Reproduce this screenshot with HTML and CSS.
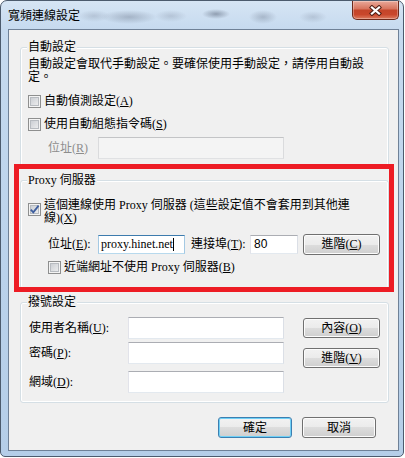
FILE: index.html
```html
<!DOCTYPE html>
<html lang="zh-Hant">
<head>
    <meta charset="UTF-8">
    <title>寬頻連線設定</title>
    <link rel="stylesheet" href="styles.css">
</head>
<body>
    <div class="window">
        <div class="titlebar">
            <span class="title">寬頻連線設定</span>
            <div class="close">
                <svg width="13" height="11" viewBox="0 0 13 11">
                    <path d="M3 2.5 L10 8.5 M10 2.5 L3 8.5" stroke="#4e1d13" stroke-width="4.2" stroke-linecap="square" fill="none"/>
                    <path d="M3 2.5 L10 8.5 M10 2.5 L3 8.5" stroke="#fff" stroke-width="2.3" stroke-linecap="square" fill="none"/>
                </svg>
            </div>
        </div>

        <div class="client">
            <fieldset class="group group-auto">
                <legend>自動設定</legend>
                <p class="desc">自動設定會取代手動設定。要確保使用手動設定，請停用自動設<br>定。</p>
                <div class="check-row row-a"><span class="chk"></span>自動偵測設定(<u>A</u>)</div>
                <div class="check-row row-b"><span class="chk"></span>使用自動組態指令碼(<u>S</u>)</div>
                <div class="field-row indent row-r">
                    <span class="lbl lbl-short disabled">位址(<u>R</u>)</span>
                    <div class="textbox off tb-script"></div>
                </div>
            </fieldset>

            <fieldset class="group group-proxy">
                <legend>Proxy 伺服器</legend>
                <div class="check-row multi">
                    <span class="chk on">
                        <svg width="11" height="11" viewBox="0 0 11 11"><path d="M1.8 5.6 L4.3 8.4 L9.6 1.6" stroke="#3e5e9e" stroke-width="1.8" fill="none"/></svg>
                    </span>
                    <span>這個連線使用 Proxy 伺服器 (這些設定值不會套用到其他連<br>線)(<u>X</u>)</span>
                </div>
                <div class="field-row indent row-addr">
                    <span class="lbl lbl-short">位址(<u>E</u>):</span>
                    <div class="textbox focus tb-addr">proxy.hinet.net<i class="caret"></i></div>
                    <span class="lbl lbl-port">連接埠(<u>T</u>):</span>
                    <div class="textbox tb-port">80</div>
                    <button class="btn btn-adv">進階(<u>C</u>)</button>
                </div>
                <div class="check-row indent row-local"><span class="chk"></span>近端網址不使用 Proxy 伺服器(<u>B</u>)</div>
            </fieldset>

            <fieldset class="group group-dial">
                <legend>撥號設定</legend>
                <div class="dial">
                    <div class="dial-fields">
                        <div class="field-row dial-row1">
                            <span class="lbl lbl-dial">使用者名稱(<u>U</u>):</span>
                            <div class="textbox tb-dial"></div>
                        </div>
                        <div class="field-row dial-row2">
                            <span class="lbl lbl-dial">密碼(<u>P</u>):</span>
                            <div class="textbox tb-dial"></div>
                        </div>
                        <div class="field-row dial-row3">
                            <span class="lbl lbl-dial">網域(<u>D</u>):</span>
                            <div class="textbox tb-dial"></div>
                        </div>
                    </div>
                    <div class="dial-buttons">
                        <button class="btn btn-side">內容(<u>O</u>)</button>
                        <button class="btn btn-side">進階(<u>V</u>)</button>
                    </div>
                </div>
            </fieldset>

            <div class="footer">
                <button class="btn btn-footer default">確定</button>
                <button class="btn btn-footer">取消</button>
            </div>

            <!-- red marker drawn over the proxy group -->
            <div class="highlight"></div>
        </div>
    </div>
</body>
</html>
```

FILE: styles.css
```css
body {
    margin: 0;
    background: #fff;
    font: 12px/14px "Liberation Serif", "Noto Sans CJK TC", serif;
    color: #000;
}
.window {
    width: 404px;
    height: 457px;
    box-sizing: border-box;
    border: 1px solid #4c5b6d;
    border-radius: 7px 7px 5px 5px;
    background: linear-gradient(#d6e5f4, #c6daef 28px, #bad2eb 60%, #b5cee8);
    display: flex;
    flex-direction: column;
}
.titlebar {
    height: 28px;
    display: flex;
    align-items: flex-start;
    padding: 0 4px 0 7px;
    background:
        radial-gradient(16px 6px at 93px 15px, rgba(90, 100, 120, 0.22), transparent),
        radial-gradient(28px 7px at 128px 16px, rgba(70, 80, 100, 0.3), transparent),
        radial-gradient(16px 6px at 170px 15px, rgba(90, 100, 120, 0.22), transparent),
        radial-gradient(14px 5px at 215px 13px, rgba(50, 60, 80, 0.4), transparent),
        radial-gradient(14px 7px at 262px 16px, rgba(70, 80, 100, 0.28), transparent),
        radial-gradient(14px 6px at 312px 16px, rgba(90, 100, 120, 0.22), transparent);
}
.title {
    flex: 1;
    line-height: 28px;
    font-family: "Noto Sans CJK TC", sans-serif;
}
.close {
    width: 47px;
    height: 19px;
    box-sizing: border-box;
    border: 1px solid #6d2a1c;
    border-top: none;
    border-radius: 0 0 5px 5px;
    background: linear-gradient(#e9a99a, #d87660 42%, #c4452a 52%, #c9472c 75%, #dd7c60);
    box-shadow: inset 0 0 0 1px rgba(255, 255, 255, 0.3);
    display: flex;
    align-items: center;
    justify-content: center;
}
.client {
    position: relative;
    margin: 0 4px 0 7px;
    height: 422px;
    box-sizing: border-box;
    border: 1px solid #6f8197;
    background: #f0f0f0;
    padding: 10px 9px 0 11px;
}

/* group boxes */
.group {
    margin: 0;
    padding: 0 8px 0 7px;
    border: 1px solid #d5dfe5;
    border-radius: 3px;
    min-width: 0;
    box-shadow: inset 0 0 0 1px #fff;
}
.group legend {
    padding: 0 1px;
    margin-left: -1px;
    line-height: 14px;
    background: #f0f0f0;
}
.group-auto {
    padding-bottom: 7px;
}
.group-proxy {
    margin-top: 6px;
    padding-bottom: 12px;
}
.group-dial {
    margin-top: 6px;
    padding-bottom: 9px;
}
.desc {
    margin: 4px 0 0;
    line-height: 13px;
}

/* rows */
.check-row {
    display: flex;
    align-items: center;
    height: 18px;
}
.row-a {
    margin-top: 8px;
}
.row-b {
    margin-top: 5px;
}
.row-r {
    margin-top: 4px;
}
.check-row.multi {
    height: auto;
    align-items: flex-start;
    line-height: 13px;
    margin-top: 12px;
}
.check-row.multi .chk {
    margin-top: 4px;
}
.row-addr {
    margin-top: 8px;
}
.row-local {
    margin-top: 3px;
}
.indent {
    margin-left: 20px;
}
.field-row {
    display: flex;
    align-items: center;
    height: 22px;
}
.lbl {
    flex: none;
}
.lbl-short {
    width: 50px;
}
.lbl-port {
    width: 59px;
    margin-left: 6px;
}
.lbl-dial {
    width: 99px;
    margin-left: 1px;
}
.disabled {
    color: #8d8d8d;
}

/* checkboxes */
.chk {
    display: inline-flex;
    flex: none;
    width: 13px;
    height: 13px;
    box-sizing: border-box;
    margin-right: 3px;
    border: 1px solid #8e8f8f;
    background: linear-gradient(135deg, #c3c7cd, #f4f4f4);
    box-shadow: inset 0 0 0 1px #f4f4f4, inset 0 0 0 2px #b7bbc0;
}
.chk svg {
    display: block;
    overflow: visible;
}

/* text boxes */
.textbox {
    flex: none;
    box-sizing: border-box;
    height: 22px;
    padding: 0 2px;
    background: #fff;
    border: 1px solid;
    border-color: #abadb3 #dbdfe6 #e3e9ef #e2e3ea;
    display: flex;
    align-items: center;
    white-space: nowrap;
}
.textbox.off {
    background: #f4f4f4;
    border-color: #c3c4c6 #dadbdd #e0e1e3 #dadbdd;
}
.textbox.focus {
    border-color: #3d7bad #a4c9e3 #b7d9ed #a4c9e3;
}
.tb-script {
    width: 186px;
}
.tb-addr {
    width: 87px;
    height: 19px;
}
.tb-port {
    width: 48px;
    height: 19px;
    padding-left: 3px;
    font-family: "Liberation Sans", sans-serif;
}
.tb-dial {
    width: 156px;
}
.caret {
    display: inline-block;
    width: 1px;
    height: 13px;
    background: #000;
}

/* buttons */
.btn {
    box-sizing: border-box;
    padding: 0;
    border: 1px solid #707070;
    border-radius: 3px;
    background: linear-gradient(#f2f2f2, #ebebeb 50%, #dddddd 50%, #cfcfcf);
    box-shadow: inset 0 0 0 1px #fcfcfc;
    font: inherit;
    color: #000;
}
.btn.default {
    border-color: #3c7fb1;
    box-shadow: inset 0 0 0 1px #6fd0f6;
}
.btn-adv {
    width: 77px;
    height: 21px;
    margin-left: 5px;
}
.dial {
    display: flex;
}
.dial-row1 {
    margin-top: 8px;
}
.dial-row2 {
    margin-top: 3px;
}
.dial-row3 {
    margin-top: 7px;
}
.dial-buttons {
    display: flex;
    flex-direction: column;
    gap: 10px;
    margin-left: 19px;
    padding-top: 9px;
}
.btn-side {
    width: 77px;
    height: 20px;
}
.footer {
    display: flex;
    justify-content: flex-end;
    gap: 10px;
    margin-top: 14px;
    padding-right: 13px;
}
.btn-footer {
    width: 74px;
    height: 21px;
}

/* annotation */
.highlight {
    position: absolute;
    left: 5px;
    top: 134px;
    width: 380px;
    height: 128px;
    box-sizing: border-box;
    border: 5px solid #ed1c24;
}
```
